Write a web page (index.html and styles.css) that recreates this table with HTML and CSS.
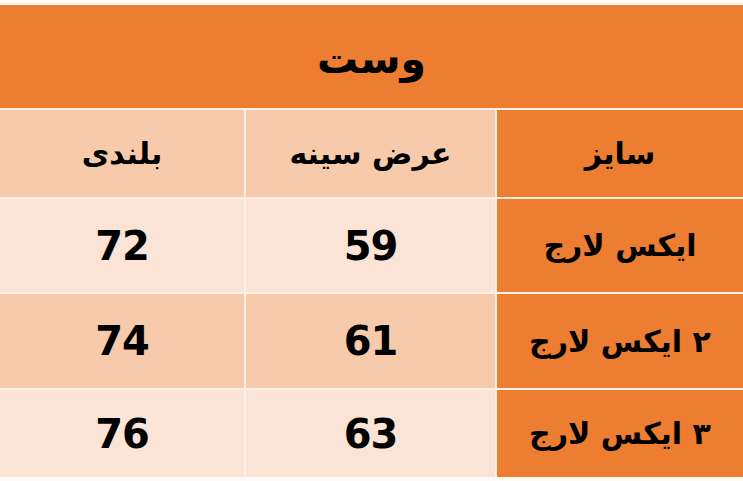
FILE: index.html
```html
<!DOCTYPE html>
<html lang="fa" dir="rtl">
<head>
<meta charset="utf-8">
<link rel="stylesheet" href="styles.css">
</head>
<body>
<div class="sheet">
  <div class="cell title">وست</div>
  <div class="cell size">سایز</div>
  <div class="cell head">عرض سینه</div>
  <div class="cell head">بلندی</div>
  <div class="cell size">ایکس لارج</div>
  <div class="cell light num">59</div>
  <div class="cell light num">72</div>
  <div class="cell size">۲ ایکس لارج</div>
  <div class="cell mid num">61</div>
  <div class="cell mid num">74</div>
  <div class="cell size">۳ ایکس لارج</div>
  <div class="cell light num">63</div>
  <div class="cell light num">76</div>
</div>
</body>
</html>
```
FILE: styles.css
```css
html, body {
  margin: 0;
  padding: 0;
  background: #fffaf3;
}
body {
  padding-top: 5px;
  width: 743px;
  height: 481px;
  box-sizing: border-box;
  font-family: "DejaVu Sans", sans-serif;
  font-weight: bold;
  color: #000;
}
.sheet {
  display: grid;
  grid-template-columns: 246px 249px 244px;
  grid-template-rows: 103px 87px 93px 94px 87px;
  gap: 2px;
  background: #fdf1e6;
}
.cell {
  display: flex;
  align-items: center;
  justify-content: center;
  font-size: 30px;
}
.title {
  grid-column: 1 / span 3;
  background: #ed7d31;
  font-size: 41px;
  padding-top: 4px;
}
.size {
  background: #ed7d31;
}
.head {
  background: #f7caac;
}
.light {
  background: #fbe4d5;
}
.mid {
  background: #f7caac;
}
.num {
  font-size: 40px;
  letter-spacing: -1px;
}
```
